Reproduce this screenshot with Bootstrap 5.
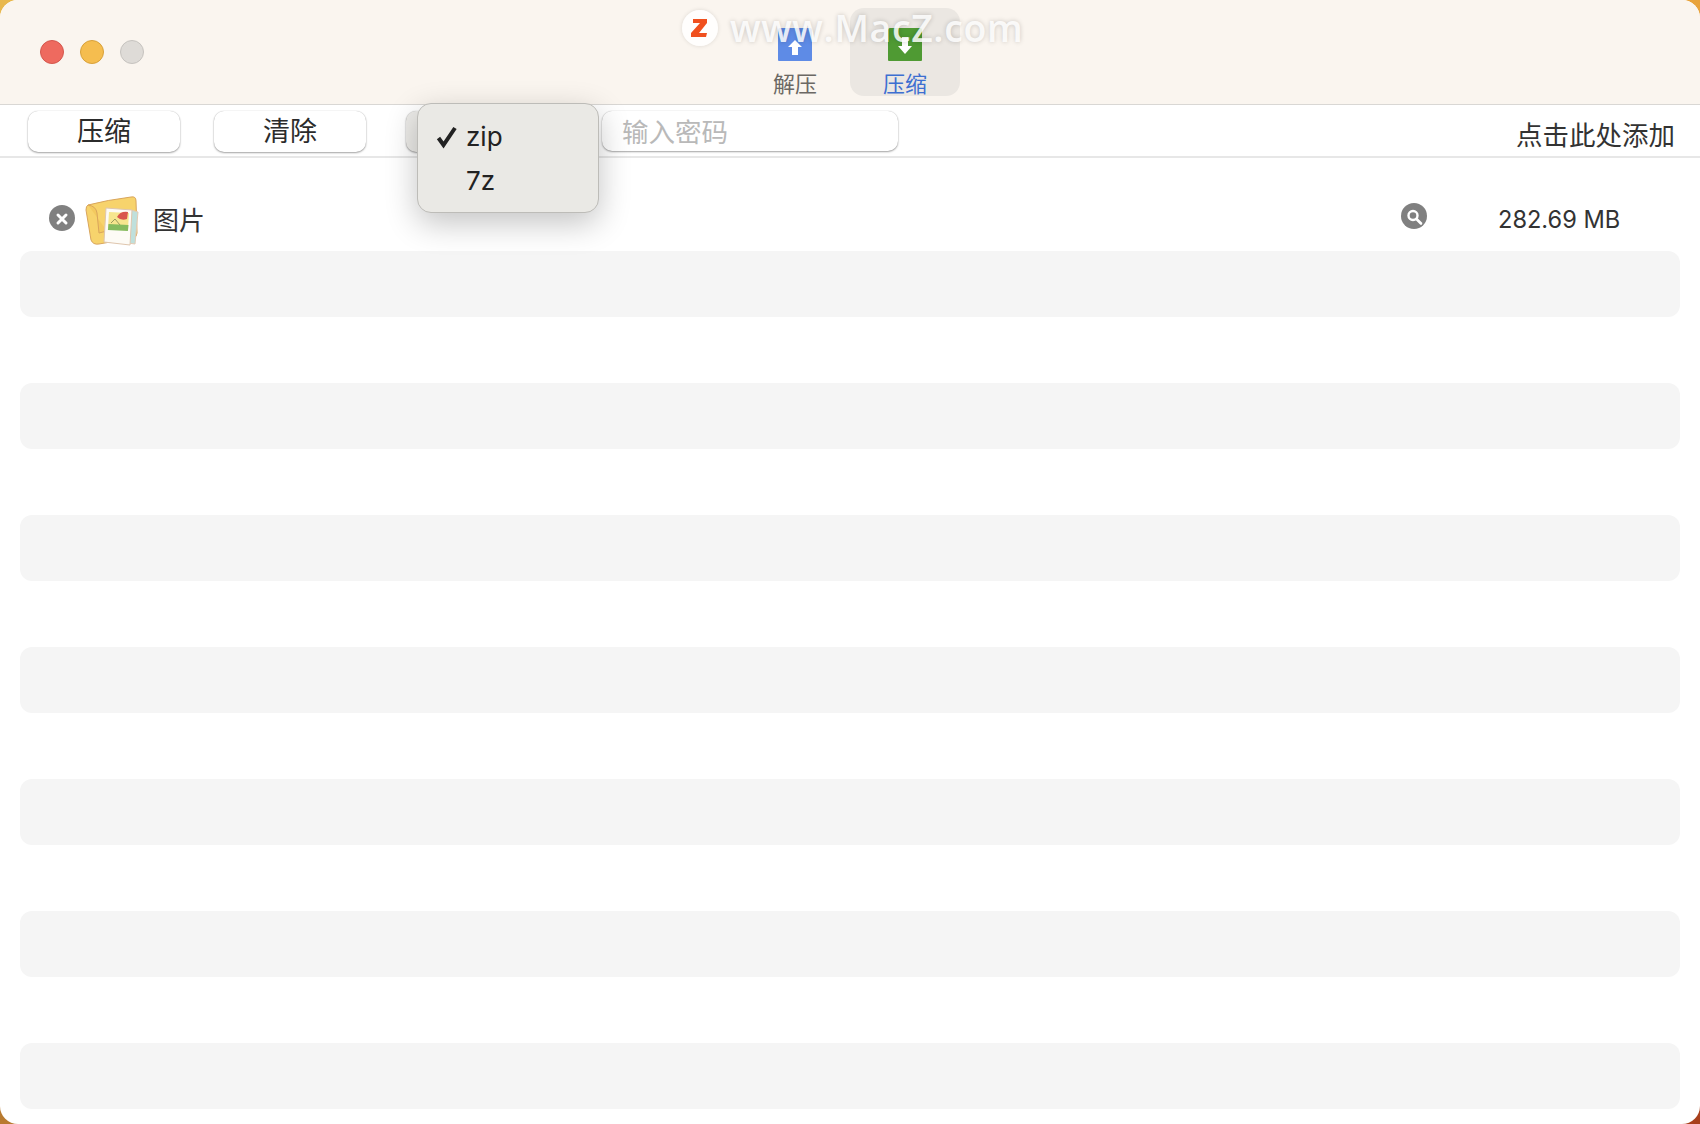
<!doctype html>
<html lang="zh">
<head>
<meta charset="utf-8">
<link href="https://cdn.jsdelivr.net/npm/bootstrap@5.3.0/dist/css/bootstrap.min.css" rel="stylesheet">
<style>
html,body{margin:0;height:100%;overflow:hidden}
body{width:1700px;height:1124px;background:conic-gradient(#e8a33c 0 90deg,#a8401c 90deg 180deg,#b87a30 180deg 270deg,#e8b84e 270deg);font-family:"Inter","Noto Sans CJK SC",sans-serif;color:#2b2b2b}
.appwin{position:relative;width:1700px;height:1124px;background:#fff;border-radius:18px;overflow:hidden}
.titlebar{height:105px;background:#faf5ef;border-bottom:1px solid #d9d7d4;position:relative}
.lights{position:absolute;left:40px;top:40px;gap:16px}
.light{width:24px;height:24px;border-radius:50%;border:1px solid}
.l-r{background:#ee6a5f;border-color:#d4574d}
.l-y{background:#f5bd4f;border-color:#d8a13a}
.l-g{background:#dedbd7;border-color:#c6c3bf}
.tabs{position:absolute;left:740px;top:8px;gap:0}
.tabitem{width:110px;height:88px;border-radius:14px;font-size:22px;line-height:28px;color:#6b6864;padding-top:18px;text-align:center}
.tabitem svg{display:block;margin:0 auto 8px;width:36px;height:36px}
.tabitem.on{background:#ebe7e2;color:#3d6fd1}
.tooling{height:53px;border-bottom:2px solid #e7e7e7;position:relative}
.tbtn{position:absolute;top:6px;height:41px;background:#fff;border-radius:10px;box-shadow:0 1px 2px rgba(0,0,0,.35),0 0 1px rgba(0,0,0,.25);border:0;padding:0;font-size:27px;color:#2b2b2b;line-height:38px;text-align:center}
.b1{left:28px;width:152px}
.b2{left:214px;width:152px}
.b3{left:406px;width:60px;background:#ecebe8}
.pwdfield{position:absolute;left:602px;top:6px;width:296px;height:40px;background:#fff;border-radius:10px;box-shadow:0 1px 2px rgba(0,0,0,.35),0 0 1px rgba(0,0,0,.25);font-size:26.500px;line-height:42px;padding-left:20px;color:#b9b9b9}
.addhint{position:absolute;right:25px;top:11px;font-size:26.500px;line-height:38px;color:#333}
.popmenu{position:absolute;left:417px;top:103px;width:182px;height:110px;background:#eae9e5;border-radius:14px;border:1px solid #bdbcb8;box-shadow:0 10px 32px rgba(0,0,0,.24);font-size:26px;line-height:44px;color:#222;padding-top:11px;z-index:5}
.popmenu .opt{padding-left:48px;position:relative}
.popmenu svg{position:absolute;left:17px;top:10px}
.filelist{padding:0 20px;position:relative}
.fileline{height:93px;position:relative}
.stripe{height:66px;background:#f5f5f5;border-radius:12px;margin-bottom:66px}
.round-ic{position:absolute;width:26px;height:26px;border-radius:50%;background:#808080}
.fname{position:absolute;left:133px;top:46px;font-size:26px;line-height:34px;color:#333}
.fsize{position:absolute;left:1478px;top:46px;font-size:23.600px;line-height:32px;color:#333}
.watermark{position:absolute;left:682px;top:10px;z-index:6;gap:12px;font-family:"Open Sans","Liberation Sans",sans-serif;font-weight:600;font-size:37.500px;line-height:36px;color:rgba(255,255,255,.86);text-shadow:0 0 5px rgba(0,0,0,.2);letter-spacing:.6px}
.zlogo{width:36px;height:36px;border-radius:50%;background:rgba(255,255,255,.85);box-shadow:0 0 4px rgba(0,0,0,.12)}
.foldericon{position:absolute;left:65px;top:37px}
</style>
</head>
<body>
<div class="appwin">
  <div class="titlebar">
    <div class="lights d-flex"><span class="light l-r"></span><span class="light l-y"></span><span class="light l-g"></span></div>
    <div class="tabs d-flex">
      <div class="tabitem">
        <svg viewBox="0 0 36 36"><path d="M1 4a2 2 0 0 1 2-2h30a2 2 0 0 1 2 2v30a1 1 0 0 1-1 1H2a1 1 0 0 1-1-1z" fill="#5e8be6"/><path d="M18 14l7 7h-4v8h-6v-8h-4z" fill="#fff"/></svg>
        解压
      </div>
      <div class="tabitem on">
        <svg viewBox="0 0 36 36"><path d="M1 4a2 2 0 0 1 2-2h30a2 2 0 0 1 2 2v30a1 1 0 0 1-1 1H2a1 1 0 0 1-1-1z" fill="#4f9a33"/><path d="M15 11h6v9h4l-7 8-7-8h4z" fill="#fff"/></svg>
        压缩
      </div>
    </div>
  </div>
  <div class="tooling">
    <button class="tbtn b1">压缩</button>
    <button class="tbtn b2">清除</button>
    <button class="tbtn b3"></button>
    <div class="pwdfield">输入密码</div>
    <div class="addhint">点击此处添加</div>
  </div>
  <div class="popmenu">
    <div class="opt"><svg width="24" height="24" viewBox="0 0 24 24"><path d="M3.500 13l5 7L20 3" fill="none" stroke="#222" stroke-width="4"/></svg>zip</div>
    <div class="opt">7z</div>
  </div>
  <div class="filelist">
    <div class="fileline">
      <span class="round-ic" style="left:29px;top:47px"><svg width="26" height="26" viewBox="0 0 26 26"><path d="M9 9l8 8M17 9l-8 8" stroke="#fff" stroke-width="3" stroke-linecap="round"/></svg></span>
      <svg class="foldericon" width="54" height="52" viewBox="0 0 54 52"><path d="M3 10Q22 5 46 2q5-1 5 4l1 32q0 4-4 5L14 49q-6 1-8-4L1 15q0-4 2-5z" fill="#f7d36c" stroke="#d9a55c"/><path d="M3 10q8 1 9 8l2 20 8-2" fill="#f3c95f" stroke="#d9a55c"/><path d="M46 15l7 2-3 32-7-1z" fill="#bfe0dc" stroke="#e3cbb4"/><path d="M21 13l26 2-2 35-26-3z" fill="#fdfbf6" stroke="#dfc6ae"/><path d="M24 17l20 1-1 16-20-1z" fill="#f6e68e"/><path d="M23.500 29l20 1-.6 6-20-1z" fill="#86bb5e"/><path d="M32 22q3-6 11-5l-1 7q-6 2-10-2z" fill="#d9564d"/><path d="M26 28l4-4 5 6" fill="none" stroke="#9a9a5c"/></svg>
      <span class="fname">图片</span>
      <span class="round-ic" style="left:1381px;top:45px"><svg width="26" height="26" viewBox="0 0 26 26"><circle cx="12" cy="11.500" r="4.500" fill="none" stroke="#fff" stroke-width="2.400"/><path d="M15.500 15l4.500 4.500" stroke="#fff" stroke-width="2.600" stroke-linecap="round"/></svg></span>
      <span class="fsize">282.69 MB</span>
    </div>
    <div class="stripe"></div><div class="stripe"></div><div class="stripe"></div><div class="stripe"></div><div class="stripe"></div><div class="stripe"></div><div class="stripe"></div>
  </div>
  <div class="watermark d-flex align-items-center">
    <span class="zlogo d-flex align-items-center justify-content-center"><svg width="20" height="22" viewBox="0 0 20 22"><path d="M3 2h14v4l-8 10h8l-1 4H1v-4l9-10H3z" fill="#f0501e"/></svg></span>
    <span>www.MacZ.com</span>
  </div>
</div>
<script src="https://cdn.jsdelivr.net/npm/bootstrap@5.3.0/dist/js/bootstrap.bundle.min.js"></script>
</body>
</html>
